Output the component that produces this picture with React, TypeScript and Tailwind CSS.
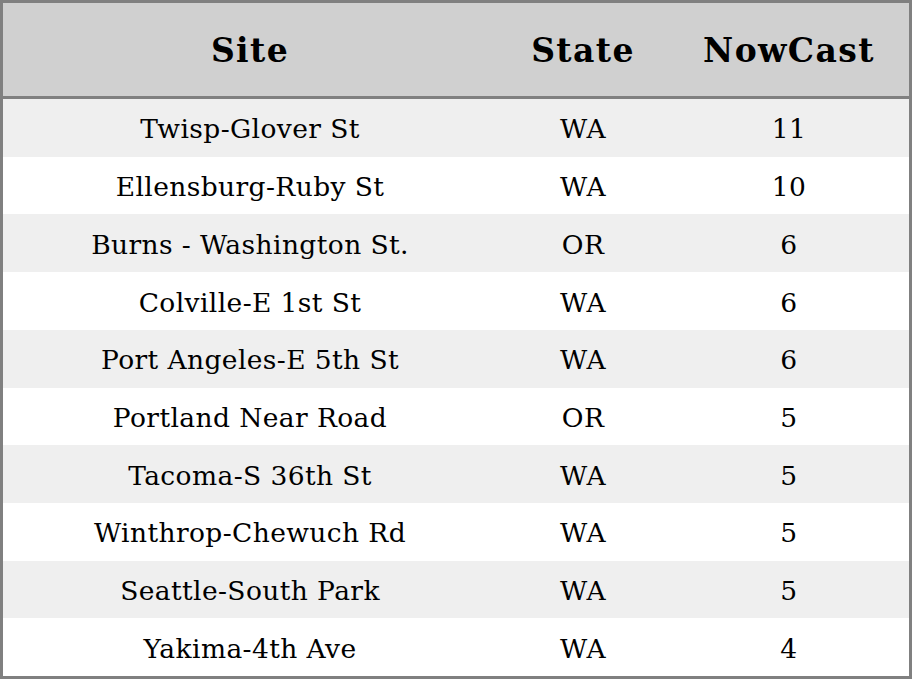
import React from "react";

const rows = [
  { site: "Twisp-Glover St", state: "WA", nowcast: 11 },
  { site: "Ellensburg-Ruby St", state: "WA", nowcast: 10 },
  { site: "Burns - Washington St.", state: "OR", nowcast: 6 },
  { site: "Colville-E 1st St", state: "WA", nowcast: 6 },
  { site: "Port Angeles-E 5th St", state: "WA", nowcast: 6 },
  { site: "Portland Near Road", state: "OR", nowcast: 5 },
  { site: "Tacoma-S 36th St", state: "WA", nowcast: 5 },
  { site: "Winthrop-Chewuch Rd", state: "WA", nowcast: 5 },
  { site: "Seattle-South Park", state: "WA", nowcast: 5 },
  { site: "Yakima-4th Ave", state: "WA", nowcast: 4 },
];

export default function App() {
  return (
    <div className="w-[912px] h-[679px] bg-white font-['DejaVu_Serif',serif] text-black">
      <div className="w-full h-full border-[3px] border-[#808080] flex flex-col">
        <div className="h-[96px] pt-[2px] flex items-center bg-[#d0d0d0] border-b-[3px] border-[#808080] font-bold text-[33px] tracking-[1.4px]">
          <div className="w-[494px] text-center">Site</div>
          <div className="w-[172px] text-center">State</div>
          <div className="flex-1 text-center">NowCast</div>
        </div>
        <div className="flex-1 flex flex-col text-[26.5px] tracking-[0.4px]">
          {rows.map((r, i) => (
            <div
              key={r.site}
              className={
                "flex-1 flex items-center pt-[3px] " +
                (i % 2 === 0 ? "bg-[#efefef]" : "bg-white")
              }
            >
              <div className="w-[494px] text-center">{r.site}</div>
              <div className="w-[172px] text-center">{r.state}</div>
              <div className="flex-1 text-center">{r.nowcast}</div>
            </div>
          ))}
        </div>
      </div>
    </div>
  );
}
